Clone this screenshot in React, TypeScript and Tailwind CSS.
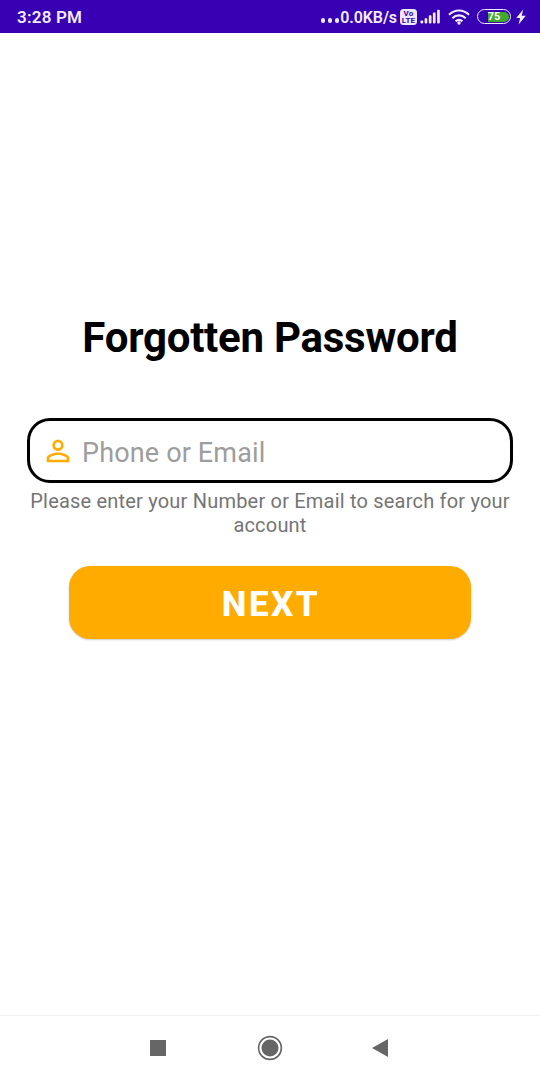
function VolteIcon() {
  return (
    <div className="ml-[3px] flex h-4 w-[17px] flex-col items-center justify-center rounded-[3.5px] bg-[#eee8fa] text-[8px] leading-[7px] font-bold tracking-[0.2px] text-[#3700b3]">
      <span>Vo</span>
      <span>LTE</span>
    </div>
  );
}

function SignalIcon() {
  return (
    <svg className="ml-[3px] h-[15px] w-[21px]" viewBox="0 0 21 15" fill="#f1ebfc">
      <rect x="0.5" y="11.5" width="2.7" height="2.9" rx=".8" />
      <rect x="4.6" y="9.2" width="2.7" height="5.2" rx=".8" />
      <rect x="8.8" y="6.2" width="2.7" height="8.2" rx=".8" />
      <rect x="12.9" y="3.6" width="2.7" height="10.8" rx=".8" />
      <rect x="17.1" y="0.8" width="2.7" height="13.6" rx=".8" />
    </svg>
  );
}

function WifiIcon() {
  return (
    <svg className="ml-[7px] h-4 w-[22px]" viewBox="0 0 22 16" fill="none" stroke="#f1ebfc" strokeWidth="2.2">
      <path d="M1 5.7C6.8.1 15.2.1 21 5.7" />
      <path d="M4.3 9.2c3.9-3.7 9.5-3.7 13.4 0" />
      <path d="M7.6 12.4c2-1.8 4.8-1.8 6.8 0" />
      <circle cx="11" cy="14" r="1.7" fill="#f1ebfc" stroke="none" />
    </svg>
  );
}

function Battery() {
  return (
    <div className="ml-[7px] flex h-[15px] w-[34px] rounded-full border-[1.5px] border-[#f1ebfc] p-[1.5px]">
      <div className="flex w-full items-center justify-center rounded-full bg-linear-to-r from-[#3700b3] from-26% via-[#43a72c] via-26% to-[#43a72c] text-[11px] leading-none font-bold text-white">
        75
      </div>
    </div>
  );
}

function StatusBar() {
  return (
    <header className="flex h-[33px] shrink-0 items-center bg-[#3700b3] pr-[14px] pl-[17px] text-[#f1ebfc]">
      <span className="text-[17px] leading-5 font-semibold tracking-[0.2px]">3:28 PM</span>
      <div className="ml-auto flex items-center">
        <div className="mt-2 mr-px flex gap-[2.5px]">
          <i className="size-[4.5px] rounded-full bg-[#f1ebfc]" />
          <i className="size-[4.5px] rounded-full bg-[#f1ebfc]" />
          <i className="size-[4.5px] rounded-full bg-[#f1ebfc]" />
        </div>
        <span className="mt-[2px] text-[16px] leading-5 font-semibold tracking-[-0.1px]">0.0KB/s</span>
        <VolteIcon />
        <SignalIcon />
        <WifiIcon />
        <Battery />
        <svg className="ml-[5px] h-4 w-[10px]" viewBox="0 0 10 16" fill="#f1ebfc">
          <path d="M7.2.5.2 9h3.9l-1.5 6.5L9.8 6.8H5.7z" />
        </svg>
      </div>
    </header>
  );
}

function NavigationBar() {
  return (
    <nav className="flex h-[65px] shrink-0 items-center border-t border-[#f2f2f2] pb-px pl-[150px] text-[#666666]">
      <div className="size-4 bg-[#666666]" />
      <svg className="ml-[91px] size-[26px]" viewBox="0 0 26 26" fill="none">
        <circle cx="13" cy="13" r="11.4" stroke="currentColor" strokeWidth="1.6" />
        <circle cx="13" cy="13" r="8.5" fill="currentColor" />
      </svg>
      <svg className="ml-[89px] h-[18px] w-4" viewBox="0 0 16 18" fill="currentColor">
        <path d="M0 9 16 0v18z" />
      </svg>
    </nav>
  );
}

export default function App() {
  return (
    <div className="flex h-[1080px] w-[540px] flex-col overflow-hidden bg-white font-[Roboto,sans-serif]">
      <StatusBar />
      <main className="flex flex-1 flex-col items-center pt-[280px]">
        <h1 className="text-[42px] leading-[50px] font-bold tracking-[-0.25px] whitespace-nowrap text-black">
          Forgotten Password
        </h1>
        <label className="mt-[55px] flex h-[65px] w-[486px] items-center rounded-[23px] border-3 border-black pl-[11px]">
          <svg className="size-[34px]" viewBox="0 0 24 24" fill="#ffab00">
            <path d="M12 5.9a2.1 2.1 0 1 1 0 4.2 2.1 2.1 0 0 1 0-4.2m0 9c2.97 0 6.1 1.46 6.1 2.1v1.1H5.9V17c0-.64 3.13-2.1 6.1-2.1M12 4C9.790 4 8 5.79 8 8s1.79 4 4 4 4-1.790 4-4-1.790-4-4-4m0 9c-2.670 0-8 1.340-8 4v3h16v-3c0-2.660-5.330-4-8-4" />
          </svg>
          <input
            type="text"
            aria-label="Phone or Email"
            placeholder="Phone or Email"
            className="mt-[5px] ml-[7px] w-96 text-[27px] tracking-[0.15px] text-black outline-none placeholder:text-[#9d9d9d]"
          />
        </label>
        <p className="mt-[6px] w-[500px] text-center text-[20px] leading-6 tracking-[0.2px] text-[#757575]">
          Please enter your Number or Email to search for your account
        </p>
        <button className="mt-[29px] h-[73px] w-[402px] rounded-[21px] bg-[#ffab00] pt-[3px] pl-[2px] text-[35px] leading-none font-extrabold tracking-[2.5px] text-white shadow-[0_1px_2px_rgba(0,0,0,0.2)]">
          NEXT
        </button>
      </main>
      <NavigationBar />
    </div>
  );
}
